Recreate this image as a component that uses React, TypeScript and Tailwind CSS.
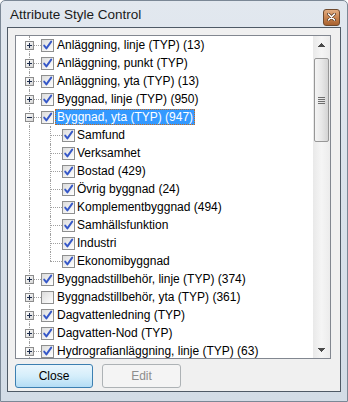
import React from "react";

const LINE = "border-[#a0a0a0]";

function Check({ checked = true }: { checked?: boolean }) {
  return (
    <div className="relative w-[13px] h-[13px] shrink-0 border border-[#8e8f8f] bg-gradient-to-br from-[#dcdcdc] to-[#ffffff]">
      {checked && (
        <svg width="13" height="13" viewBox="0 0 13 13" className="absolute left-[-1px] top-[-1px]">
          <path d="M3.2 6.6 L5.4 9.4 L10.2 2.6" fill="none" stroke="#3658c8" strokeWidth="1.9" strokeLinecap="round" strokeLinejoin="round" />
        </svg>
      )}
    </div>
  );
}

function Expander({ expanded }: { expanded: boolean }) {
  return (
    <svg width="9" height="9" viewBox="0 0 9 9" shapeRendering="crispEdges">
      <defs>
        <linearGradient id="exg" x1="0" y1="0" x2="1" y2="1">
          <stop offset="0" stopColor="#ffffff" />
          <stop offset="1" stopColor="#d4d4d4" />
        </linearGradient>
      </defs>
      <rect x="0.5" y="0.5" width="8" height="8" fill="url(#exg)" stroke="#8c8c8c" />
      <path d="M2 4.5 H7" stroke="#1a2a4a" />
      {!expanded && <path d="M4.5 2 V7" stroke="#1a2a4a" />}
    </svg>
  );
}

function ParentRow({
  label,
  checked = true,
  expanded = false,
  selected = false,
}: {
  label: string;
  checked?: boolean;
  expanded?: boolean;
  selected?: boolean;
}) {
  return (
    <div className="relative h-[18px] flex items-center whitespace-nowrap">
      <div className={`absolute left-[13px] top-0 bottom-0 border-l border-dotted ${LINE}`} />
      <div className="w-[9px] shrink-0" />
      <div className="relative w-[9px] h-[9px] shrink-0 bg-white">
        <Expander expanded={expanded} />
      </div>
      <div className={`w-[7px] shrink-0 border-t border-dotted ${LINE}`} />
      <Check checked={checked} />
      {selected ? (
        <span className="ml-[1px] px-[1px] h-[16px] leading-[14px] bg-[#3399ff] text-white border border-dotted border-[#c86a1e]">
          {label}
        </span>
      ) : (
        <span className="ml-[3px]">{label}</span>
      )}
    </div>
  );
}

function ChildRow({ label, last = false }: { label: string; last?: boolean }) {
  return (
    <div className="relative h-[18px] flex items-center whitespace-nowrap">
      <div className={`absolute left-[13px] top-0 bottom-0 border-l border-dotted ${LINE}`} />
      <div className={`absolute left-[34px] top-0 border-l border-dotted ${LINE} ${last ? "h-[9px]" : "bottom-0"}`} />
      <div className="w-[34px] shrink-0" />
      <div className={`w-[12px] shrink-0 border-t border-dotted ${LINE}`} />
      <Check />
      <span className="ml-[2px]">{label}</span>
    </div>
  );
}

function Tri({ up }: { up: boolean }) {
  return (
    <svg width="7" height="4" viewBox="0 0 7 4" shapeRendering="crispEdges">
      <path d={up ? "M3.5 0 L7 4 L0 4 Z" : "M0 0 L7 0 L3.5 4 Z"} fill="#4a4a4a" />
    </svg>
  );
}

export default function App() {
  const children = [
    "Samfund",
    "Verksamhet",
    "Bostad (429)",
    "Övrig byggnad (24)",
    "Komplementbyggnad (494)",
    "Samhällsfunktion",
    "Industri",
    "Ekonomibyggnad",
  ];
  return (
    <div
      className="w-[348px] h-[402px] overflow-hidden flex flex-col border border-[#7b8896] rounded-t-[5px] bg-gradient-to-b from-[#e2e8ef] via-[#d9e1ea] to-[#d3dce6]"
      style={{ fontFamily: '"Liberation Sans", Arial, sans-serif' }}
    >
      {/* Title bar */}
      <div className="h-[26px] shrink-0 flex items-center justify-between pl-[9px] pr-[7px]">
        <span className="text-[13.5px] text-[#1b1b1b] leading-none mt-[2px]">Attribute Style Control</span>
        <div className="w-[17px] h-[17px] mt-[6px] rounded-[3px] border border-[#6f4a2e] bg-gradient-to-b from-[#e2ad82] via-[#c98450] to-[#a8622f] flex items-center justify-center">
          <svg width="9" height="8" viewBox="0 0 9 8">
            <path d="M1.5 1 L7.5 7 M7.5 1 L1.5 7" stroke="#5a3a22" strokeWidth="3" strokeLinecap="round" />
            <path d="M1.5 1 L7.5 7 M7.5 1 L1.5 7" stroke="#ffffff" strokeWidth="1.6" strokeLinecap="round" />
          </svg>
        </div>
      </div>

      {/* Client area */}
      <div className="ml-[6px] w-[334px] h-[365px] shrink-0 border border-[#4f5a66] bg-[#f0f0f0] flex flex-col">
        <div className="ml-[7px] mt-[7px] w-[316px] h-[324px] shrink-0 border border-[#828790] bg-white flex text-[12px] text-black">
          <div className="flex-1 overflow-hidden">
            <ParentRow label="Anläggning, linje (TYP) (13)" />
            <ParentRow label="Anläggning, punkt (TYP)" />
            <ParentRow label="Anläggning, yta (TYP) (13)" />
            <ParentRow label="Byggnad, linje (TYP) (950)" />
            <ParentRow label="Byggnad, yta (TYP) (947)" expanded selected />
            {children.map((c, i) => (
              <ChildRow key={c} label={c} last={i === children.length - 1} />
            ))}
            <ParentRow label="Byggnadstillbehör, linje (TYP) (374)" />
            <ParentRow label="Byggnadstillbehör, yta (TYP) (361)" checked={false} />
            <ParentRow label="Dagvattenledning (TYP)" />
            <ParentRow label="Dagvatten-Nod (TYP)" />
            <ParentRow label="Hydrografianläggning, linje (TYP) (63)" />
          </div>
          {/* Scrollbar */}
          <div className="w-[17px] shrink-0 flex flex-col bg-gradient-to-r from-[#e9e9e9] via-[#f5f5f5] to-[#ececec]">
            <div className="h-[17px] shrink-0 flex items-center justify-center">
              <Tri up />
            </div>
            <div className="flex-1 flex flex-col">
              <div className="mt-[5px] mx-[1px] h-[84px] rounded-[2px] border border-[#979797] bg-gradient-to-r from-[#f4f4f4] via-[#e8e8e8] to-[#d4d4d4] flex items-center justify-center">
                <div className="flex flex-col gap-[1px]">
                  <div className="w-[7px] h-[1px] bg-[#6e6e6e]" />
                  <div className="w-[7px] h-[1px] bg-[#6e6e6e]" />
                  <div className="w-[7px] h-[1px] bg-[#6e6e6e]" />
                  <div className="w-[7px] h-[1px] bg-[#6e6e6e]" />
                </div>
              </div>
            </div>
            <div className="h-[17px] shrink-0 flex items-center justify-center">
              <Tri up={false} />
            </div>
          </div>
        </div>

        {/* Buttons */}
        <div className="ml-[7px] mt-[5px] flex gap-[9px] text-[12px]">
          <div className="w-[78px] h-[24px] rounded-[3px] border border-[#3c7fb1] bg-gradient-to-b from-[#eaf6fd] via-[#d5eefb] to-[#b4ddf5] flex items-center justify-center text-black">
            Close
          </div>
          <div className="w-[79px] h-[24px] rounded-[3px] border border-[#adb2b5] bg-[#f4f4f4] flex items-center justify-center text-[#8d8d8d]">
            Edit
          </div>
        </div>
      </div>
    </div>
  );
}
